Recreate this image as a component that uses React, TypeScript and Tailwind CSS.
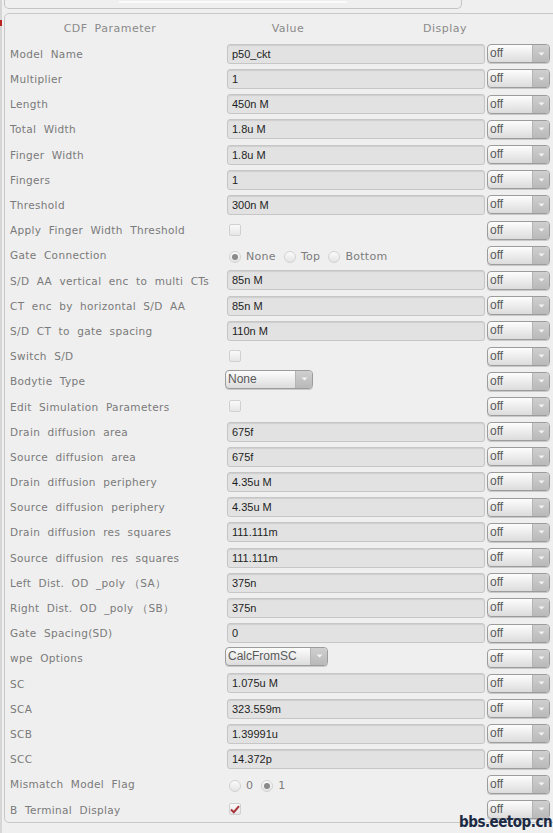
import React from "react";

type Row =
  | { kind: "field"; label: string; value: string }
  | { kind: "check"; label: string; checked?: boolean }
  | { kind: "radio"; label: string; options: string[]; selected: number }
  | { kind: "select"; label: string; value: string; width: string };

const rows: Row[] = [
  { kind: "field", label: "Model  Name", value: "p50_ckt" },
  { kind: "field", label: "Multiplier", value: "1" },
  { kind: "field", label: "Length", value: "450n M" },
  { kind: "field", label: "Total  Width", value: "1.8u M" },
  { kind: "field", label: "Finger  Width", value: "1.8u M" },
  { kind: "field", label: "Fingers", value: "1" },
  { kind: "field", label: "Threshold", value: "300n M" },
  { kind: "check", label: "Apply  Finger  Width  Threshold" },
  { kind: "radio", label: "Gate  Connection", options: ["None", "Top", "Bottom"], selected: 0 },
  { kind: "field", label: "S/D  AA  vertical  enc  to  multi  CTs", value: "85n M" },
  { kind: "field", label: "CT  enc  by  horizontal  S/D  AA", value: "85n M" },
  { kind: "field", label: "S/D  CT  to  gate  spacing", value: "110n M" },
  { kind: "check", label: "Switch  S/D" },
  { kind: "select", label: "Bodytie  Type", value: "None", width: "w-[88px]" },
  { kind: "check", label: "Edit  Simulation  Parameters" },
  { kind: "field", label: "Drain  diffusion  area", value: "675f" },
  { kind: "field", label: "Source  diffusion  area", value: "675f" },
  { kind: "field", label: "Drain  diffusion  periphery", value: "4.35u M" },
  { kind: "field", label: "Source  diffusion  periphery", value: "4.35u M" },
  { kind: "field", label: "Drain  diffusion  res  squares", value: "111.111m" },
  { kind: "field", label: "Source  diffusion  res  squares", value: "111.111m" },
  { kind: "field", label: "Left  Dist.  OD  _poly （SA）", value: "375n" },
  { kind: "field", label: "Right  Dist.  OD  _poly （SB）", value: "375n" },
  { kind: "field", label: "Gate  Spacing(SD)", value: "0" },
  { kind: "select", label: "wpe  Options", value: "CalcFromSC", width: "w-[103px]" },
  { kind: "field", label: "SC", value: "1.075u M" },
  { kind: "field", label: "SCA", value: "323.559m" },
  { kind: "field", label: "SCB", value: "1.39991u" },
  { kind: "field", label: "SCC", value: "14.372p" },
  { kind: "radio", label: "Mismatch  Model  Flag", options: ["0", "1"], selected: 1 },
  { kind: "check", label: "B  Terminal  Display", checked: true },
];

function Arrow() {
  return (
    <div className="flex h-full w-[17px] items-center justify-center rounded-r-[3px] border-l border-[#b4b4b4] bg-gradient-to-b from-[#cfcfcf] to-[#b9b9b9]">
      <svg width="7" height="4" viewBox="0 0 7 4">
        <path d="M0.5 0.5 L3.5 3.5 L6.5 0.5 Z" fill="#f4f4f4" />
      </svg>
    </div>
  );
}

function Dropdown({ value, width }: { value: string; width: string }) {
  return (
    <div
      className={`flex h-[19px] ${width} items-stretch overflow-hidden rounded-[4px] border border-[#9c9c9c] bg-gradient-to-b from-[#fdfdfd] to-[#dcdcdc] shadow-[0_1px_0_#c9c9c9]`}
    >
      <span className="flex-1 pl-[2px] font-['Liberation_Sans',sans-serif] text-[12px] leading-[17px] text-[#5a5a5a]">
        {value}
      </span>
      <Arrow />
    </div>
  );
}

function Checkbox({ checked }: { checked?: boolean }) {
  return (
    <div className="ml-[2px] flex h-[12px] w-[12px] items-center justify-center rounded-[2px] border border-[#d0d0d0] bg-gradient-to-b from-[#fafafa] to-[#e6e6e6]">
      {checked && (
        <svg width="10" height="9" viewBox="0 0 10 9">
          <path d="M1 4.5 L3.8 7.2 L9 1.2" stroke="#a8323a" strokeWidth="2" fill="none" />
        </svg>
      )}
    </div>
  );
}

function Radio({ on }: { on: boolean }) {
  return (
    <div className="flex h-[12px] w-[12px] items-center justify-center rounded-full border border-[#d2d2d2] bg-gradient-to-b from-[#fbfbfb] to-[#e4e4e4]">
      {on && <div className="h-[6px] w-[6px] rounded-full bg-[#8a8a8a]" />}
    </div>
  );
}

function ValueCell({ row }: { row: Row }) {
  switch (row.kind) {
    case "field":
      return (
        <div className="h-[20px] w-[258px] rounded-[3px] border border-[#c6c6c6] bg-[#e2e2e2] pl-[4px] font-['Liberation_Sans',sans-serif] text-[11px] leading-[19px] text-[#1e1e1e] shadow-[inset_0_1px_1px_#cfcfcf]">
          {row.value}
        </div>
      );
    case "check":
      return <Checkbox checked={row.checked} />;
    case "radio":
      return (
        <div className="mt-[4px] flex items-center gap-[5px] pl-[2px] text-[11px] tracking-[0.3px] text-[#7c7c7c]">
          {row.options.map((o, i) => (
            <div key={o} className="mr-[3px] flex items-center gap-[5px]">
              <Radio on={i === row.selected} />
              <span>{o}</span>
            </div>
          ))}
        </div>
      );
    case "select":
      return (
        <div className="-ml-[2px] -mt-[4px]">
          <Dropdown value={row.value} width={row.width} />
        </div>
      );
  }
}

export default function App() {
  return (
    <div className="relative h-[833px] w-[553px] overflow-hidden bg-[#efefef] font-['DejaVu_Sans',sans-serif]">
      <div className="absolute left-0 top-0 h-[833px] w-[2px] bg-[#d6d6d6]" />
      <div className="absolute left-0 top-[20px] h-[6px] w-[2px] bg-[#b22]" />

      <div className="ml-[4px] flex h-[9px] w-[458px] justify-center rounded-b-[5px] border border-t-0 border-[#c4c4c4]">
        <div className="mt-[1px] h-[2px] w-[228px] bg-[#fafafa]" />
      </div>

      <div className="ml-[4px] mt-[4px] h-[810px] w-[560px] rounded-[5px] border border-[#c8c8c8] pt-[2px]">
        <div className="flex h-[25.2px] items-center pt-[2px] text-[11px] tracking-[0.5px] text-[#8a8a8a] [word-spacing:3px]">
          <span className="ml-[5px] w-[200px] text-center">CDF Parameter</span>
          <span className="w-[156px] text-center">Value</span>
          <span className="w-[158px] text-center">Display</span>
        </div>

        {rows.map((row, i) => (
          <div key={i} className="flex h-[25.2px] items-center">
            <span className="mt-[2px] w-[222px] whitespace-pre pl-[5px] text-[10.5px] tracking-[0.35px] text-[#7a7a7a]">
              {row.label}
            </span>
            <div className="flex w-[258px] items-center">
              <ValueCell row={row} />
            </div>
            <div className="ml-[2px]">
              <Dropdown value="off" width="w-[63px]" />
            </div>
          </div>
        ))}
      </div>

      <div className="absolute right-[1px] top-[813px] font-['DejaVu_Sans_Condensed','DejaVu_Sans',sans-serif] text-[15px] font-bold leading-[18px] tracking-[-0.5px] text-[#1c2a44]">
        bbs.eetop.cn
      </div>
    </div>
  );
}
